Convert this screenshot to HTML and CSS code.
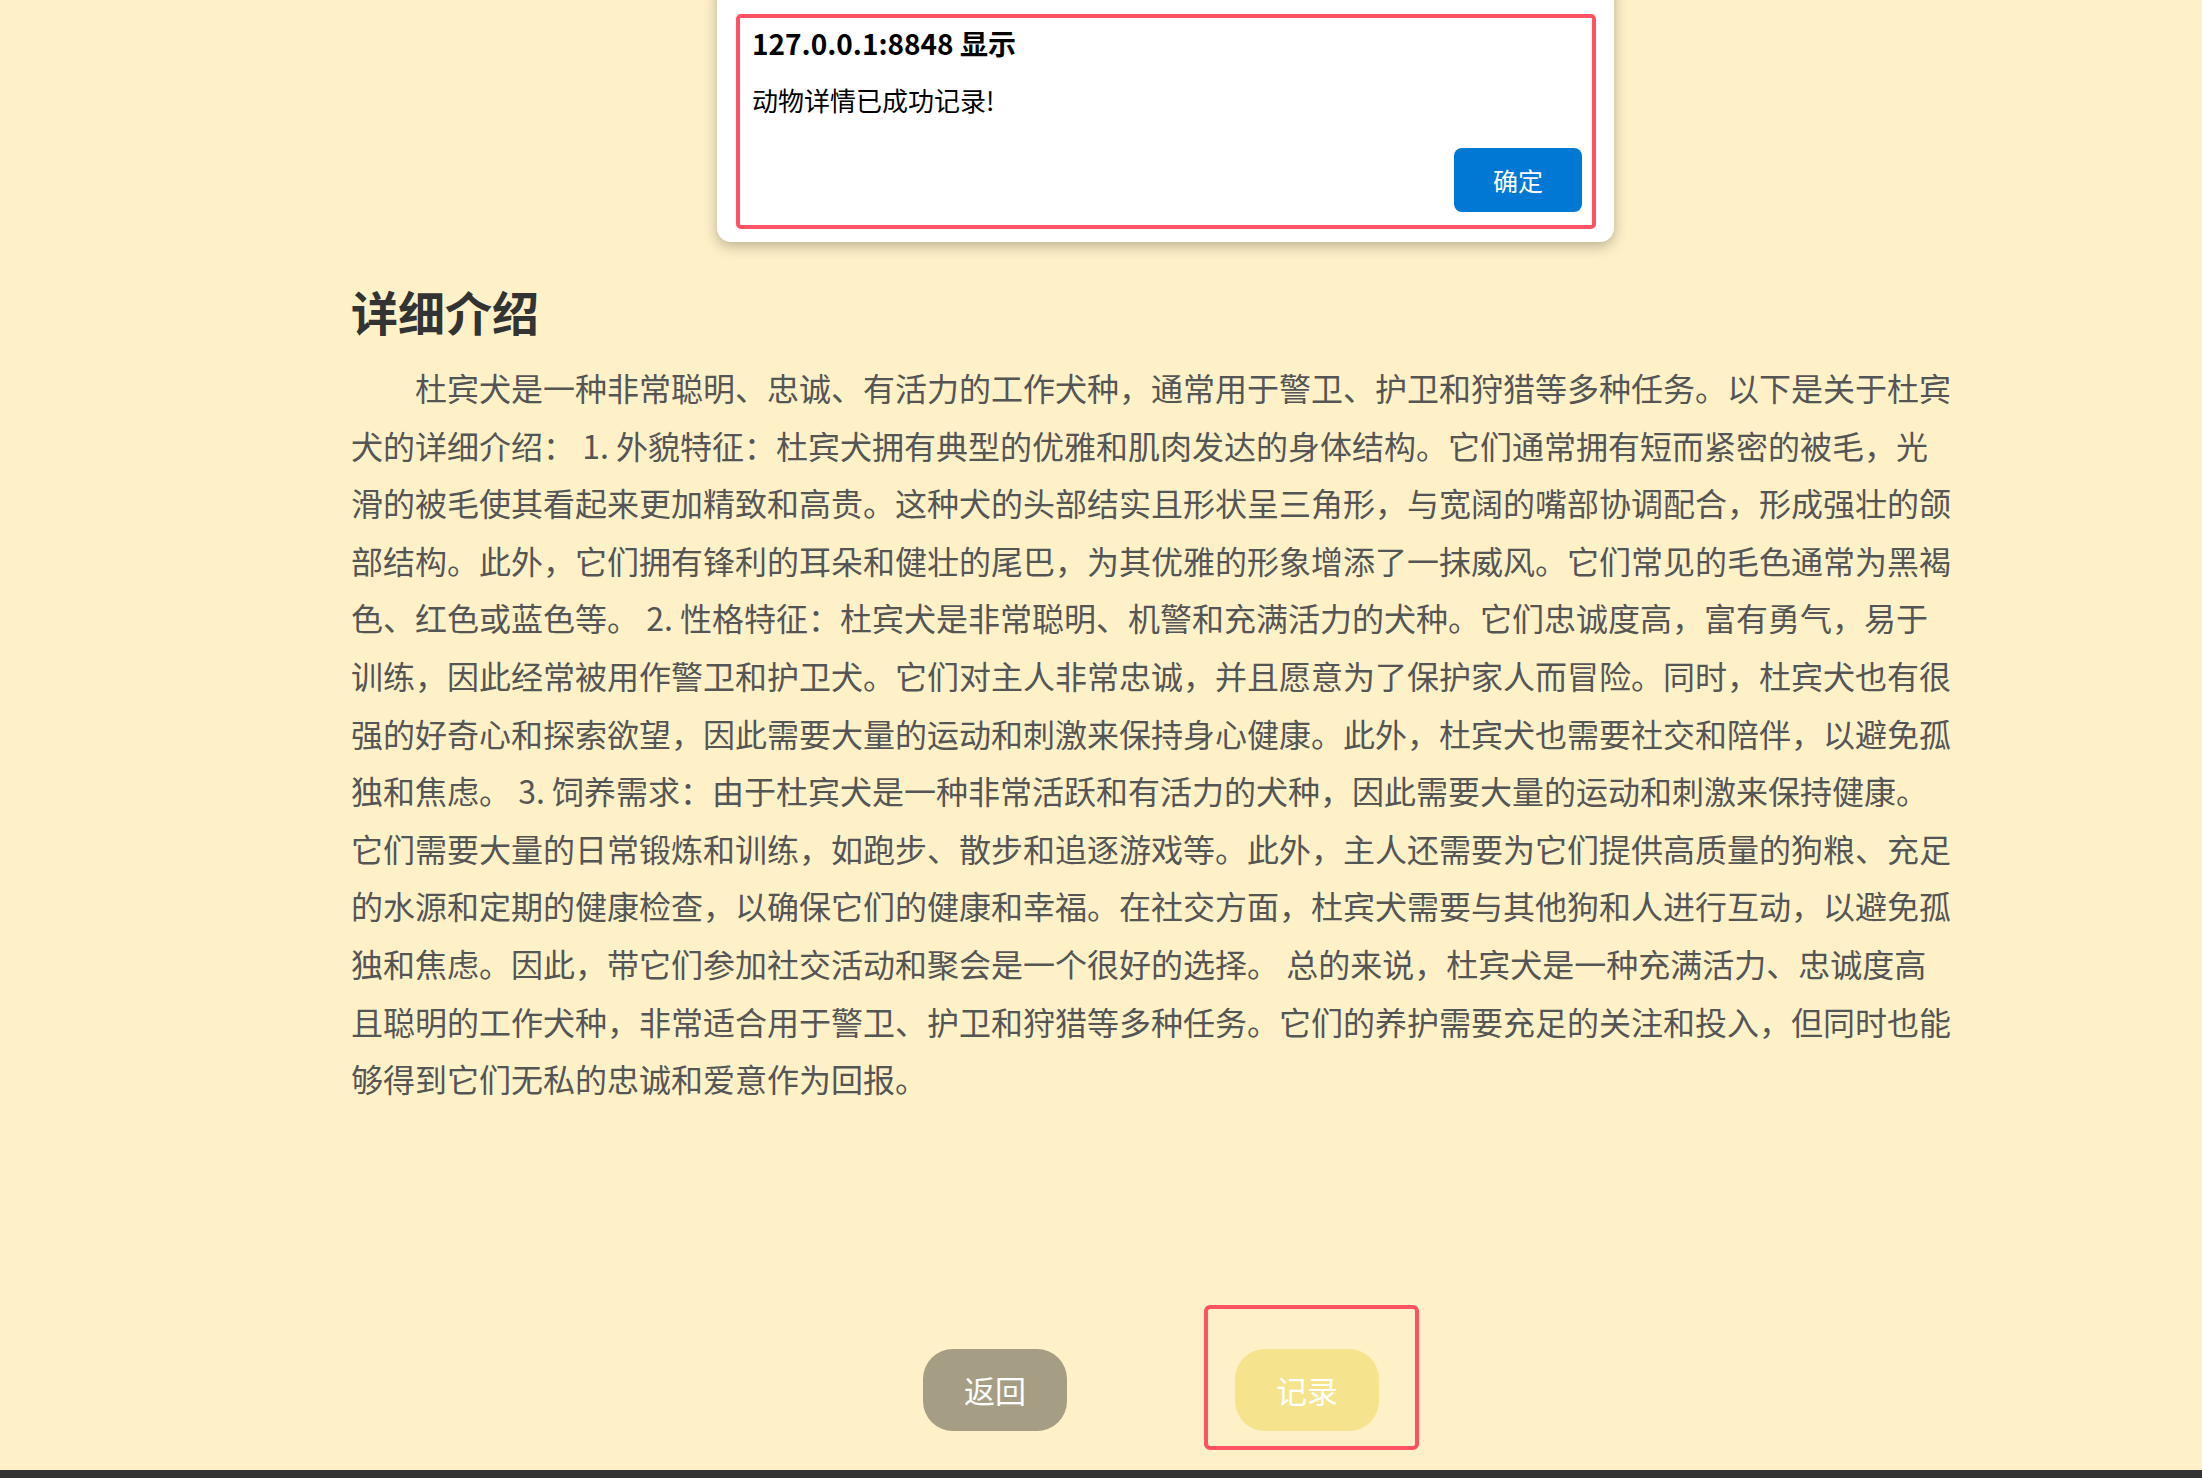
FILE: index.html
```html
<!DOCTYPE html>
<html lang="zh-CN">
<head>
<meta charset="utf-8">
<title>详细介绍</title>
<link rel="stylesheet" href="styles.css">
</head>
<body>
<div class="page">
  <main class="detail">
    <h2 class="detail-title">详细介绍</h2>
    <p class="detail-text">杜宾犬是一种非常聪明、忠诚、有活力的工作犬种，通常用于警卫、护卫和狩猎等多种任务。以下是关于杜宾犬的详细介绍： 1. 外貌特征：杜宾犬拥有典型的优雅和肌肉发达的身体结构。它们通常拥有短而紧密的被毛，光滑的被毛使其看起来更加精致和高贵。这种犬的头部结实且形状呈三角形，与宽阔的嘴部协调配合，形成强壮的颌部结构。此外，它们拥有锋利的耳朵和健壮的尾巴，为其优雅的形象增添了一抹威风。它们常见的毛色通常为黑褐色、红色或蓝色等。 2. 性格特征：杜宾犬是非常聪明、机警和充满活力的犬种。它们忠诚度高，富有勇气，易于训练，因此经常被用作警卫和护卫犬。它们对主人非常忠诚，并且愿意为了保护家人而冒险。同时，杜宾犬也有很强的好奇心和探索欲望，因此需要大量的运动和刺激来保持身心健康。此外，杜宾犬也需要社交和陪伴，以避免孤独和焦虑。 3. 饲养需求：由于杜宾犬是一种非常活跃和有活力的犬种，因此需要大量的运动和刺激来保持健康。 它们需要大量的日常锻炼和训练，如跑步、散步和追逐游戏等。此外，主人还需要为它们提供高质量的狗粮、充足的水源和定期的健康检查，以确保它们的健康和幸福。在社交方面，杜宾犬需要与其他狗和人进行互动，以避免孤独和焦虑。因此，带它们参加社交活动和聚会是一个很好的选择。 总的来说，杜宾犬是一种充满活力、忠诚度高且聪明的工作犬种，非常适合用于警卫、护卫和狩猎等多种任务。它们的养护需要充足的关注和投入，但同时也能够得到它们无私的忠诚和爱意作为回报。</p>
    <div class="actions">
      <button class="btn btn-back">返回</button>
      <span class="highlight">
        <button class="btn btn-record">记录</button>
      </span>
    </div>
  </main>
  <footer class="footer-bar"></footer>
</div>

<div class="alert">
  <div class="alert-frame">
    <div class="alert-title">127.0.0.1:8848 显示</div>
    <div class="alert-msg">动物详情已成功记录!</div>
    <div class="alert-actions">
      <button class="alert-ok">确定</button>
    </div>
  </div>
</div>
</body>
</html>
```

FILE: styles.css
```css
* { box-sizing: border-box; }

html, body {
  margin: 0;
  padding: 0;
}

body {
  background: #fef1c8;
  font-family: "Noto Sans CJK SC", "Microsoft YaHei", "Liberation Sans", sans-serif;
  color: #555;
}

.page {
  min-height: 1478px;
  display: flex;
  flex-direction: column;
}

.detail {
  flex: 1;
  width: 1600px;
  margin-left: 351px;
  padding-top: 283px;
}

.detail-title {
  margin: 0 0 20px;
  font-size: 47px;
  line-height: 56px;
  font-weight: 700;
  color: #333;
}

.detail-text {
  margin: 0;
  font-size: 32px;
  line-height: 57.6px;
  text-indent: 2em;
  color: #555;
}

.actions {
  margin-top: 241px;
  display: flex;
  justify-content: center;
  gap: 168px;
}

.btn {
  width: 144px;
  height: 82px;
  border: none;
  border-radius: 30px;
  color: #fff;
  font-family: inherit;
  font-size: 31px;
  padding: 0;
  cursor: pointer;
}

.btn-back { background: #a59e85; }
.btn-record { background: #f5e48d; }

.highlight {
  position: relative;
  display: block;
}

.highlight::after {
  content: "";
  position: absolute;
  left: -31px;
  right: -40px;
  top: -44px;
  bottom: -19px;
  border: 4px solid #ff5263;
  border-radius: 6px;
}

.footer-bar {
  height: 8px;
  background: #333;
}

/* alert dialog */
.alert {
  position: absolute;
  left: 717px;
  top: -20px;
  width: 897px;
  height: 262px;
  background: #fff;
  border-radius: 14px;
  box-shadow: 0 4px 14px rgba(0, 0, 0, 0.28);
  padding: 34px 18px 13px 19px;
}

.alert-frame {
  height: 100%;
  border: 4px solid #ff5263;
  border-radius: 5px;
  padding: 8px 10px 13px 12px;
  display: flex;
  flex-direction: column;
  color: #000;
}

.alert-title {
  font-size: 28px;
  line-height: 34px;
  font-weight: 700;
}

.alert-msg {
  margin-top: 23px;
  font-size: 26px;
  line-height: 34px;
}

.alert-actions {
  margin-top: auto;
  display: flex;
  justify-content: flex-end;
}

.alert-ok {
  width: 128px;
  height: 64px;
  border: none;
  border-radius: 8px;
  background: #0078d4;
  color: #fff;
  font-family: inherit;
  font-size: 25px;
  padding: 0;
}
```
